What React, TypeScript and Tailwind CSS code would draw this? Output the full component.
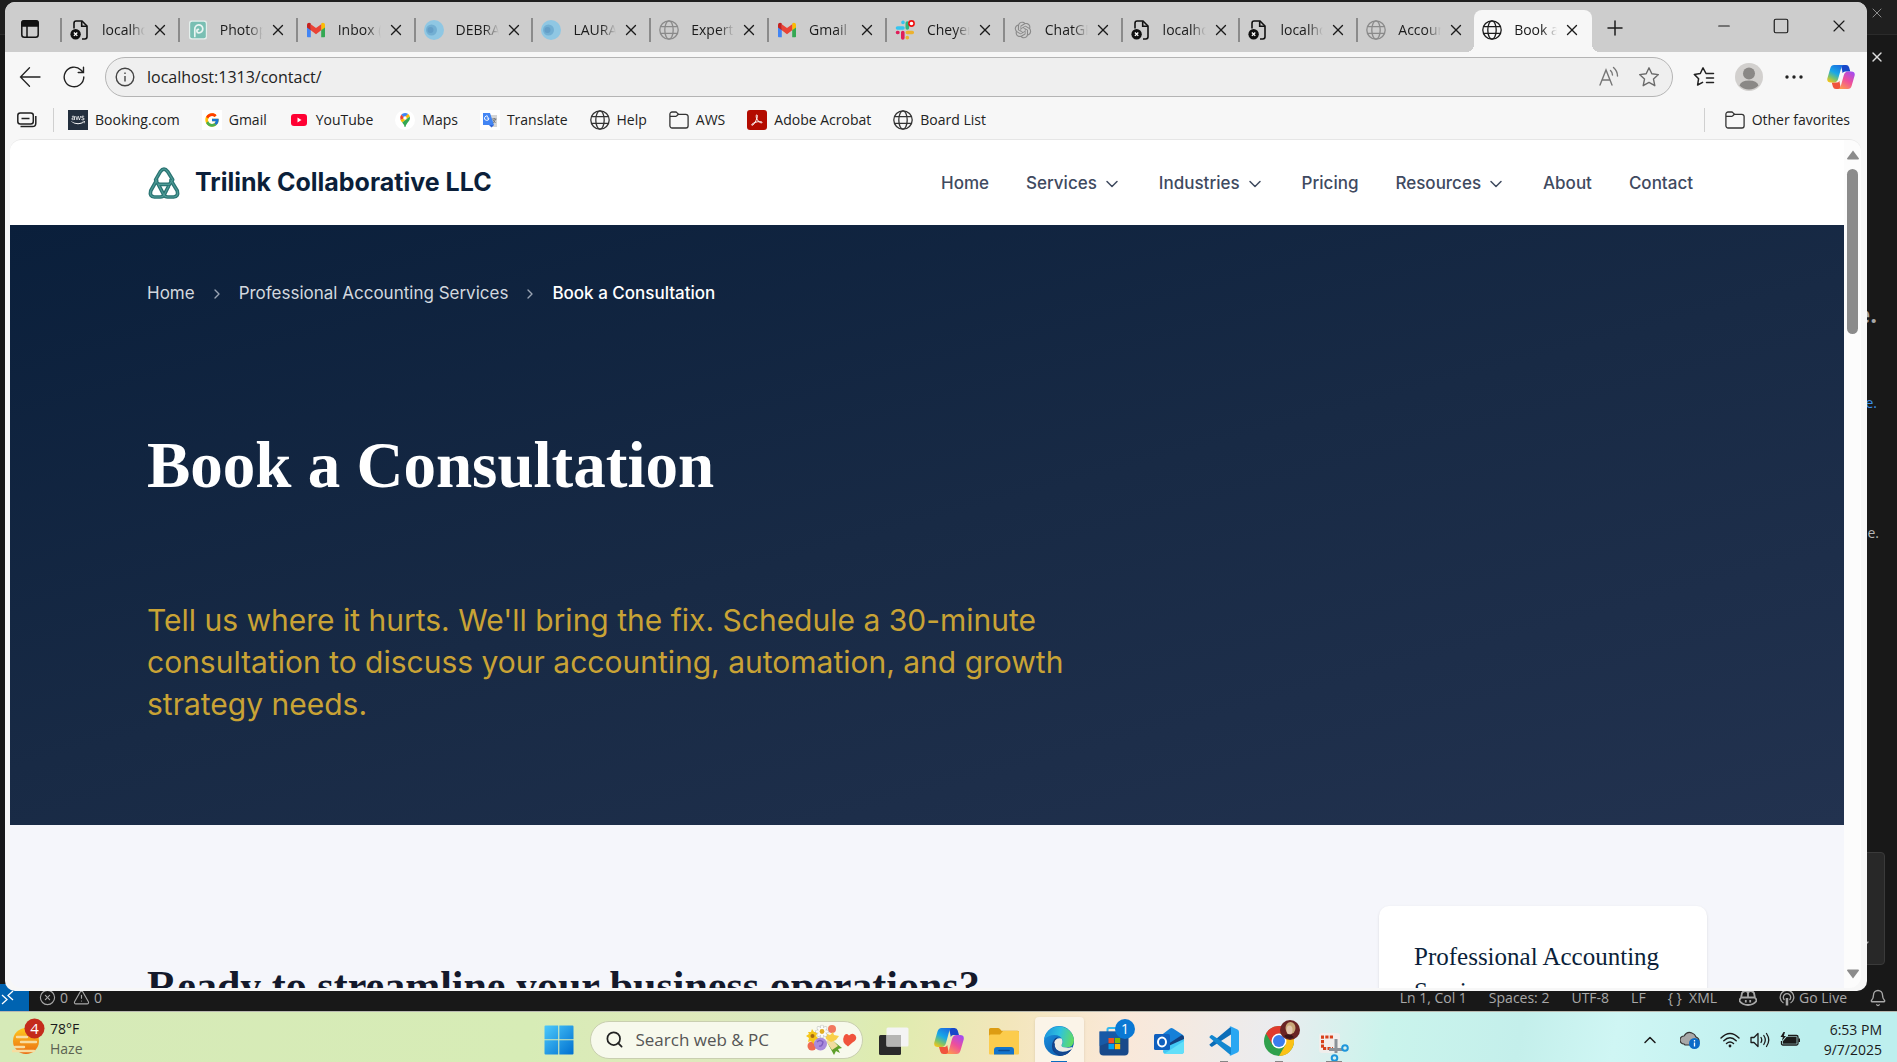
import React, { useId } from "react";
import {
  Bell,
  ChevronDown,
  ChevronRight,
  ChevronUp,
  CircleX,
  Minus,
  Plus,
  Search,
  Square,
  TriangleAlert,
  X,
} from "lucide-react";
import { FcGoogle } from "react-icons/fc";
import { FaAws } from "react-icons/fa";
import { RiOpenaiFill } from "react-icons/ri";

const uiFont = "font-['Open_Sans','Noto_Sans',sans-serif]";

/* ---------- site favicons ---------- */

function GlobeIcon({ className = "" }: { className?: string }) {
  return (
    <svg viewBox="0 0 20 20" className={"size-5 shrink-0 " + className} fill="none" stroke="currentColor" strokeWidth="1.3">
      <circle cx="10" cy="10" r="9.2" />
      <ellipse cx="10" cy="10" rx="4.2" ry="9.2" />
      <path d="M1.8 6.7h16.4M1.8 13.3h16.4" />
    </svg>
  );
}

function BrokenPage() {
  return (
    <svg viewBox="0 0 20 20" className="size-5 shrink-0" fill="none" stroke="#111" strokeWidth="1.6">
      <path d="M4 8.5V3.2A2.2 2.2 0 0 1 6.2 1H12l5 5v10.8a2.2 2.2 0 0 1-2.2 2.2H12" />
      <path d="M11.7 1.2v5.1H17" />
      <circle cx="5.6" cy="14.2" r="5.2" fill="#111" stroke="none" />
      <path d="m3.9 12.5 3.4 3.4m0-3.4-3.4 3.4" stroke="#fff" strokeWidth="1.3" />
    </svg>
  );
}

function PhotopeaIcon() {
  return (
    <svg viewBox="0 0 20 20" className="size-5 shrink-0">
      <rect x="1" y="0.5" width="18" height="19" rx="2.5" fill="#e4efec" />
      <rect x="2.2" y="1.7" width="15.6" height="16.6" rx="2" fill="#79bfb3" />
      <path d="M6.8 16.5V9.2a4 4 0 1 1 4 3.7c-2.400 0-2.600-3.400-.4-3.600" fill="none" stroke="#e9f5f2" strokeWidth="1.7" strokeLinecap="round" />
    </svg>
  );
}

function GmailIcon() {
  return (
    <svg viewBox="0 0 20 16" className="h-4 w-5 shrink-0">
      <path d="M1 4v10.500q0 .8.8.8h3V7.500Z" fill="#4285f4" />
      <path d="M19 4v10.500q0 .8-.8.8h-3V7.500Z" fill="#34a853" />
      <path d="M15.200 2.300v6L19 5.400V3c0-2-2.200-2.800-3.800-1.600Z" fill="#fbbc04" />
      <path d="M4.800 8.300V2.200L10 6.100l5.200-3.900v6.100L10 12.200Z" fill="#ea4335" />
      <path d="M1 3v2.400l3.800 2.900V1.500C3.200.2 1 1 1 3Z" fill="#c5221f" />
    </svg>
  );
}

function BlueDot() {
  return (
    <svg viewBox="0 0 20 20" className="size-5 shrink-0">
      <circle cx="10" cy="10" r="10" fill="#8fc7e3" />
      <circle cx="7.500" cy="10" r="5.500" fill="#72afd3" />
      <circle cx="6.500" cy="10" r="3" fill="#649fc8" />
    </svg>
  );
}

function SlackIcon() {
  return (
    <svg viewBox="0 0 20 20" className="size-5 shrink-0" strokeWidth="3.600" strokeLinecap="round" fill="none">
      <path d="M2.500 8H8M8 2.200v.3" stroke="#36c5f0" />
      <path d="M12.300 3v5" stroke="#2eb67d" />
      <path d="M12.300 12.500h5M12.300 17.500v.2" stroke="#ecb22e" />
      <path d="M7.800 12.500V18M2.500 12.500h.4" stroke="#e01e5a" />
      <circle cx="16.500" cy="3.500" r="2.600" stroke="#e11" strokeWidth="1.600" fill="#fff" />
    </svg>
  );
}

function FolderIcon() {
  return (
    <svg viewBox="0 0 20 20" className="size-5 shrink-0" fill="none" stroke="#333" strokeWidth="1.300">
      <path d="M.9 4.200A2.200 2.200 0 0 1 3.100 2h3.500q.8 0 1.300.6L9.500 4.300h7.400a2.200 2.200 0 0 1 2.200 2.200v9.300a2.200 2.200 0 0 1-2.200 2.200H3.100a2.200 2.200 0 0 1-2.200-2.200Z" />
      <path d="M1 6.400h5.500q.8 0 1.300-.6l1.600-1.500" />
    </svg>
  );
}

function CopilotIcon({ className }: { className: string }) {
  const id = useId().replace(/:/g, "");
  return (
    <svg viewBox="0 0 30 28" className={className}>
      <defs>
        <linearGradient id={id + "a"} x1="0.700" y1="0" x2="0.200" y2="1">
          <stop offset="0" stopColor="#1b6fe0" />
          <stop offset="0.450" stopColor="#18a8e8" />
          <stop offset="0.750" stopColor="#7cc36a" />
          <stop offset="1" stopColor="#f5c518" />
        </linearGradient>
        <linearGradient id={id + "b"} x1="0.800" y1="0" x2="0.200" y2="1">
          <stop offset="0" stopColor="#a44bf0" />
          <stop offset="0.500" stopColor="#ee4f9b" />
          <stop offset="1" stopColor="#ff9a4d" />
        </linearGradient>
      </defs>
      <path d="M15 1h5.500q2.500 0 3.200 2.500l1.300 4.500h-5.500q-2 0-2.700 2Z" fill="#1748c9" />
      <path d="M15 27H9.500Q7 27 6.300 24.500L5 20h5.500q2 0 2.700-2Z" fill="#f0543c" />
      <path d="M7.500 1H18q-2 .5-2.700 3L12 16q-1.200 4-4.500 4H4Q-.5 20 .3 15.500L3.500 4.500Q4.500 1 7.500 1Z" fill={`url(#${id}a)`} />
      <path d="M22.500 27H12q2-.5 2.700-3L18 12q1.200-4 4.500-4H26q4.500 0 3.700 4.500L26.500 23.500Q25.500 27 22.500 27Z" fill={`url(#${id}b)`} />
    </svg>
  );
}

/* ---------- browser tab strip ---------- */

type Tab = { title: string; icon: React.ReactNode; active?: boolean };

const tabs: Tab[] = [
  { title: "localhost", icon: <BrokenPage /> },
  { title: "Photopea", icon: <PhotopeaIcon /> },
  { title: "Inbox (4)", icon: <GmailIcon /> },
  { title: "DEBRA", icon: <BlueDot /> },
  { title: "LAURA", icon: <BlueDot /> },
  { title: "Expert", icon: <GlobeIcon className="text-[#8a8a8a]" /> },
  { title: "Gmail", icon: <GmailIcon /> },
  { title: "Cheyenne", icon: <SlackIcon /> },
  { title: "ChatGPT", icon: <RiOpenaiFill className="size-5 shrink-0 text-[#8a8a8a]" /> },
  { title: "localhost", icon: <BrokenPage /> },
  { title: "localhost", icon: <BrokenPage /> },
  { title: "Accounting", icon: <GlobeIcon className="text-[#8a8a8a]" /> },
  { title: "Book a Consultation", icon: <GlobeIcon className="text-[#1b1b1b]" />, active: true },
];

function TabStrip() {
  return (
    <div className="flex h-[50px] shrink-0 items-end bg-[#cdcdcd]">
      <button aria-label="Tab actions" className="flex h-[42px] w-[55px] items-center pb-1 pl-4">
        <svg viewBox="0 0 18 18" className="size-[18px]" fill="none" stroke="#111" strokeWidth="1.500">
          <rect x="0.800" y="0.800" width="16.400" height="16.400" rx="2.500" />
          <path d="M1 2.500q0-1.500 1.500-1.500h13q1.500 0 1.500 1.500V6H1Z" fill="#111" />
          <path d="M6 6v11" />
        </svg>
      </button>
      <div role="tablist" className="flex min-w-0 flex-[0_1_1532px]">
        {tabs.map((t, i) => (
          <div
            key={i}
            role="tab"
            aria-selected={!!t.active}
            className={
              "relative flex h-[42px] min-w-0 flex-1 items-center " +
              (t.active ? "rounded-t-lg bg-[#f7f7f7]" : "")
            }
          >
            {t.active && (
              <>
                <span className="absolute -left-2 bottom-0 size-2 bg-[radial-gradient(circle_at_0_0,#cdcdcd_8px,#f7f7f7_8px)]" />
                <span className="absolute -right-2 bottom-0 size-2 bg-[radial-gradient(circle_at_100%_0,#cdcdcd_8px,#f7f7f7_8px)]" />
              </>
            )}
            <div className={"mb-[2px] flex h-6 w-full items-center pl-2 " + (t.active ? "" : "border-l-2 border-[#8b8b8b]")}>
              {t.icon}
              <span className="ml-3 w-[43px] shrink-0 overflow-hidden whitespace-nowrap text-sm text-[#1b1b1b] [mask-image:linear-gradient(to_right,#000_65%,transparent)]">
                {t.title}
              </span>
              <button aria-label={"Close " + t.title} className="ml-[6px]">
                <X className="size-[18px] text-[#1b1b1b]" strokeWidth={1.8} />
              </button>
            </div>
          </div>
        ))}
      </div>
      <button aria-label="New tab" className="mb-3 ml-[11px]">
        <Plus className="size-6 text-[#1b1b1b]" strokeWidth={1.5} />
      </button>
      <div className="mb-4 ml-auto mr-[18px] flex items-center gap-[39px] text-[#1b1b1b]">
        <button aria-label="Minimize"><Minus className="size-[18px]" strokeWidth={1.6} /></button>
        <button aria-label="Maximize">
          <Square className="size-[18px]" strokeWidth={1.6} />
        </button>
        <button aria-label="Close window"><X className="size-5" strokeWidth={1.4} /></button>
      </div>
    </div>
  );
}

/* ---------- address bar ---------- */

function StarIcon() {
  return (
    <svg viewBox="0 0 22 22" className="size-[22px]" fill="none" stroke="#6b6b6b" strokeWidth="1.400" strokeLinejoin="round">
      <path d="m11 1.800 2.800 6 6.600.8-4.900 4.500 1.300 6.600-5.800-3.300-5.800 3.300 1.300-6.600L1.600 8.600l6.600-.8Z" />
    </svg>
  );
}

function AddressBar() {
  return (
    <div className="flex h-[50px] shrink-0 items-center pl-[14px] pr-3">
      <button aria-label="Back">
        <svg viewBox="0 0 22 22" className="size-[22px]" fill="none" stroke="#222" strokeWidth="1.300" strokeLinecap="round">
          <path d="M21 11H1.500M10.500 1.800 1.500 11l9 9.200" />
        </svg>
      </button>
      <button aria-label="Refresh" className="ml-[22px]">
        <svg viewBox="0 0 22 22" className="size-[22px]" fill="none" stroke="#222" strokeWidth="1.400" strokeLinecap="round">
          <path d="M20.800 11A9.800 9.800 0 1 1 17.900 4l2 2M20.500 1.200v5.300h-5.300" />
        </svg>
      </button>
      <div className="ml-5 flex h-10 flex-1 items-center rounded-full border border-[#b4b4b4] bg-[#efefef] pl-[9px] pr-3">
        <svg viewBox="0 0 20 20" className="size-5 shrink-0" fill="none" stroke="#444" strokeWidth="1.400">
          <circle cx="10" cy="10" r="8.800" />
          <path d="M10 9v5.500M10 5.500v1.600" />
        </svg>
        <input
          aria-label="Address"
          defaultValue="localhost:1313/contact/"
          className="ml-3 min-w-0 flex-1 bg-transparent text-base text-[#222] outline-none"
        />
        <button aria-label="Read aloud">
          <svg viewBox="0 0 22 22" className="size-[22px]" fill="none" stroke="#767676" strokeWidth="1.400" strokeLinecap="round">
            <path d="M2 19 8 4l6 15M4 14h8M12.500 4.500q2 1.800 2 4.500M15.500 1.500Q19.500 5 19.500 10" />
          </svg>
        </button>
        <button aria-label="Add to favorites" className="ml-[18px]">
          <StarIcon />
        </button>
      </div>
      <button aria-label="Favorites" className="ml-5">
        <svg viewBox="0 0 22 22" className="size-[22px]" fill="none" stroke="#222" strokeWidth="1.500" strokeLinejoin="round" strokeLinecap="round">
          <path d="M13 7.500 10 1.800 7.300 7.500l-6 .9 4.300 4.300-1 6.300 5-2.700M13 7.500h7.500M13.500 12h7M13.500 16.500h7" />
        </svg>
      </button>
      <button aria-label="Profile" className="ml-5">
        <svg viewBox="0 0 28 28" className="size-7">
          <circle cx="14" cy="14" r="14" fill="#d2d0ce" />
          <circle cx="14" cy="10.500" r="6" fill="#8a8886" />
          <path d="M4.500 22.500Q6 17.500 14 17.500t9.500 5a13.500 13.500 0 0 1-19 0Z" fill="#8a8886" />
        </svg>
      </button>
      <button aria-label="Settings and more" className="ml-[22px]">
        <svg viewBox="0 0 18 4" className="h-1 w-[18px]" fill="#222">
          <circle cx="2" cy="2" r="1.700" /><circle cx="9" cy="2" r="1.700" /><circle cx="16" cy="2" r="1.700" />
        </svg>
      </button>
      <button aria-label="Copilot" className="ml-6">
        <CopilotIcon className="h-[26px] w-7" />
      </button>
    </div>
  );
}

/* ---------- favorites bar ---------- */

const favorites: { label: string; icon: React.ReactNode }[] = [
  {
    label: "Booking.com",
    icon: (
      <span className="flex size-5 items-center justify-center bg-[#232f3e]">
        <FaAws className="size-[14px] text-white" />
      </span>
    ),
  },
  { label: "Gmail", icon: <span className="flex size-5 items-center justify-center bg-white"><FcGoogle className="size-4" /></span> },
  {
    label: "YouTube",
    icon: (
      <svg viewBox="0 0 20 20" className="size-5">
        <rect x="2" y="4" width="16" height="12" rx="3" fill="#f03" />
        <path d="m8.500 7.500 4 2.500-4 2.500Z" fill="#fff" />
      </svg>
    ),
  },
  {
    label: "Maps",
    icon: (
      <svg viewBox="0 0 20 20" className="size-5">
        <circle cx="10" cy="10" r="10" fill="#fff" />
        <path d="M10 3a5 5 0 0 0-3.800 1.800L10 8.200l3.200-4.100A5 5 0 0 0 10 3Z" fill="#4285f4" />
        <path d="M6.200 4.800A5 5 0 0 0 5.600 10L10 8.200Z" fill="#ea4335" />
        <path d="M13.200 4.100 5.600 10.500 7.200 12.600 14.800 6.500a5 5 0 0 0-1.600-2.400Z" fill="#fbbc04" />
        <path d="M14.800 6.500q.6 2.300-.7 4.200C12.500 13 11 14.500 10.400 17h-.8q-.5-2.400-2.400-4.400Z" fill="#34a853" />
        <circle cx="10" cy="8" r="1.700" fill="#fff" />
      </svg>
    ),
  },
  {
    label: "Translate",
    icon: (
      <svg viewBox="0 0 20 20" className="size-5">
        <rect width="20" height="20" fill="#fff" />
        <path d="M8 5h9v12h-5Z" fill="#d6d6d6" />
        <path d="M3 3h7l4 12H3Z" fill="#4285f4" />
        <path d="M9 15h5l-2.500 2.500Z" fill="#3367d6" />
        <path d="M9 8H6.800M8.900 8.200A2.200 2.200 0 1 1 8 6.400" fill="none" stroke="#fff" />
        <path d="M12 9h4.500M14.200 8v1m1.300 0q-.5 2.500-2.700 4m.2-3 2.500 3" fill="none" stroke="#5f6368" strokeWidth="0.800" />
      </svg>
    ),
  },
  { label: "Help", icon: <GlobeIcon className="text-[#333]" /> },
  { label: "AWS", icon: <FolderIcon /> },
  {
    label: "Adobe Acrobat",
    icon: (
      <svg viewBox="0 0 20 20" className="size-5">
        <rect width="20" height="20" rx="3" fill="#b30b00" />
        <path d="M4.800 14.500c1.500-1.700 4.800-2.900 7.800-2.900 2.200 0 3 .7 2.200 1.200-1 .5-4.300-1.500-5.400-5-.5-2.300 0-3.200.6-2.900.7.400.4 2.600-.9 5.300-1.400 3-3 5.100-4 5.100-.4 0-.6-.4-.3-.8Z" fill="none" stroke="#fff" strokeWidth="1" />
      </svg>
    ),
  },
  { label: "Board List", icon: <GlobeIcon className="text-[#333]" /> },
];

function FavoritesBar() {
  return (
    <div className="flex h-[37px] shrink-0 items-center pb-[2px] pl-3 pr-[17px] text-sm text-[#222]">
      <svg viewBox="0 0 20 16" className="h-4 w-5" fill="none" stroke="#222" strokeWidth="1.500">
        <rect x="0.800" y="1" width="15.500" height="11" rx="2.500" />
        <path d="M4.500 6.500h8M3.500 14.500h12q3.300 0 3.300-3.300V4" />
      </svg>
      <div className="ml-4 h-6 w-px bg-[#d0d0d0]" />
      <nav aria-label="Favorites" className="ml-[14px] flex items-center gap-[22px]">
        {favorites.map((f) => (
          <a key={f.label} href="#" className="flex items-center gap-[7px] whitespace-nowrap">
            {f.icon}
            {f.label}
          </a>
        ))}
      </nav>
      <div className="ml-auto h-6 w-px bg-[#d0d0d0]" />
      <a href="#" className="ml-5 flex items-center gap-[7px] whitespace-nowrap">
        <FolderIcon />
        Other favorites
      </a>
    </div>
  );
}

/* ---------- web page ---------- */

function TrilinkLogo() {
  const layers = [
    { color: "#2b7574", width: 4 },
    { color: "#4f9c97", width: 1.2 },
  ];
  return (
    <svg viewBox="0 0 34 35" className="h-8 w-[34px]" fill="none" strokeLinejoin="round" strokeLinecap="round">
      {layers.map((l) => (
        <g key={l.color} stroke={l.color} strokeWidth={l.width}>
          <path d="M9.500 17.500 7.800 14 13 5Q17-.5 21 5l5.500 9-3.500 5H11" />
          <path d="M9 14.500 2.500 26Q.8 32.500 6.500 32.800H13q3 0 4.300-2.500L22 21" />
          <path d="M24.500 14.500 31.500 26q1.700 6.500-4 6.800H21q-3 0-4.300-2.500L10.500 18.500" />
        </g>
      ))}
    </svg>
  );
}

const navItems = [
  { label: "Home" },
  { label: "Services", menu: true },
  { label: "Industries", menu: true },
  { label: "Pricing" },
  { label: "Resources", menu: true },
  { label: "About" },
  { label: "Contact" },
];

function WebPage() {
  return (
    <div className="flex min-w-0 flex-1 flex-col font-['Inter',sans-serif]">
      <header className="h-[85px] shrink-0 bg-white">
        <div className="mx-auto flex h-full max-w-[1560px] items-center justify-between">
          <a href="#" className="flex items-center gap-[14px] text-[25px] font-bold text-[#0b1f3a]">
            <TrilinkLogo />
            Trilink Collaborative LLC
          </a>
          <nav aria-label="Main" className="mr-[14px] mt-[2px] flex items-center gap-[37px] text-[17px] font-medium text-[#3f4a5f]">
            {navItems.map((n) => (
              <a key={n.label} href="#" className="flex items-center gap-[5px]">
                {n.label}
                {n.menu && <ChevronDown className="size-5" strokeWidth={1.8} />}
              </a>
            ))}
          </nav>
        </div>
      </header>

      <section className="shrink-0 bg-[linear-gradient(165deg,#0a1f3b_0%,#182a45_50%,#22324f_100%)] pb-[100px] pt-14">
        <div className="mx-auto max-w-[1560px]">
          <nav aria-label="Breadcrumb" className="flex h-[26px] items-center text-[17px] text-[#d3d8df]">
            <a href="#">Home</a>
            <ChevronRight className="mx-[14px] size-4 text-[#9aa4b3]" />
            <a href="#">Professional Accounting Services</a>
            <ChevronRight className="mx-[14px] size-4 text-[#9aa4b3]" />
            <span aria-current="page" className="font-medium text-white">Book a Consultation</span>
          </nav>
          <h1 className="mt-[118px] font-['Liberation_Serif',serif] text-[65px] font-bold leading-[80px] text-white">
            Book a Consultation
          </h1>
          <p className="mt-[94px] max-w-[940px] text-[30px] leading-[42px] text-[#c9a335]">
            Tell us where it hurts. We'll bring the fix. Schedule a 30-minute consultation to discuss your accounting,
            automation, and growth strategy needs.
          </p>
        </div>
      </section>

      <section className="min-h-0 flex-1 overflow-hidden bg-[#f5f6fb] pt-[81px]">
        <div className="mx-auto flex max-w-[1560px] items-start justify-between">
          <h2 className="mt-[55px] font-['Liberation_Serif',serif] text-[42px] font-bold leading-[50px] text-[#14192b]">
            Ready to streamline your business operations?
          </h2>
          <aside className="w-[328px] rounded-[10px] bg-white px-[35px] py-[33px] shadow-sm">
            <h3 className="font-['Liberation_Serif',serif] text-[25px] leading-[35px] text-[#0b1f3a]">
              Professional Accounting Services
            </h3>
          </aside>
        </div>
      </section>
    </div>
  );
}

function Scrollbar() {
  return (
    <div className="flex w-[17px] shrink-0 flex-col items-center bg-[#fcfcfc] pb-[9px] pt-[10px]">
      <svg viewBox="0 0 12 10" className="h-[10px] w-3" fill="#8b8b8b"><path d="M6 .5 12 8.500q0 1-1 1H1q-1 0-1-1Z" /></svg>
      <div className="mt-[9px] h-[165px] w-[11px] rounded-full bg-[#8b8b8b]" />
      <svg viewBox="0 0 12 10" className="mt-auto h-[10px] w-3" fill="#8b8b8b"><path d="m6 9.500 6-8q0-1-1-1H1q-1 0-1 1Z" /></svg>
    </div>
  );
}

function BrowserWindow() {
  return (
    <div className="absolute bottom-5 left-[5px] right-[30px] top-[2px] flex flex-col overflow-hidden rounded-[10px] bg-[#f7f7f7]">
      <TabStrip />
      <AddressBar />
      <FavoritesBar />
      <div className="mb-[3px] ml-[5px] mr-[6px] flex min-h-0 flex-1 overflow-hidden rounded-xl border-t border-[#e6e6e6]">
        <WebPage />
        <Scrollbar />
      </div>
    </div>
  );
}

/* ---------- editor behind the browser ---------- */

function Editor() {
  return (
    <div className="flex h-full flex-col bg-[#181818] text-[#a8a8a8]">
      <div className="flex h-[35px] shrink-0 items-start justify-end border-b border-[#2b2b2b] bg-[#1f1f1f] pr-3 pt-[5px]">
        <X className="size-4" strokeWidth={1.2} />
      </div>
      <div className="flex min-h-0 flex-1 flex-col items-end">
        <X className="mr-3 mt-[14px] size-4 text-[#ddd]" />
        <span className="mr-5 mt-[233px] text-2xl font-bold leading-8">e.</span>
        <span className="mr-5 mt-[61px] text-sm leading-6 text-[#3b8fe8]">e.</span>
        <span className="mr-[18px] mt-[106px] text-sm leading-6 text-[#b5b5b5]">e.</span>
        <div className="mr-3 mt-[307px] flex h-[113px] w-16 items-end justify-end rounded border border-[#3a3a3a] bg-[#282828] pb-3 pr-3">
          <ChevronDown className="size-4" />
        </div>
      </div>
      <div className="flex h-[27px] shrink-0 items-center text-sm">
        <div className="flex h-full w-[29px] items-center bg-[#0063b1] text-white">
          <svg viewBox="0 0 16 16" className="size-4" fill="none" stroke="currentColor" strokeWidth="1.300">
            <path d="m2 5 5 4.500L2 14M13 1 8 5.500 13 10" />
          </svg>
        </div>
        <CircleX className="ml-[10px] size-[17px]" strokeWidth={1.6} />
        <span className="ml-1">0</span>
        <TriangleAlert className="ml-[5px] size-[17px]" strokeWidth={1.6} />
        <span className="ml-1">0</span>
        <div className="ml-auto flex items-center gap-[22px] whitespace-nowrap pr-[10px]">
          <span>Ln 1, Col 1</span>
          <span>Spaces: 2</span>
          <span>UTF-8</span>
          <span>LF</span>
          <span>{"{ }"}&nbsp; XML</span>
          <svg viewBox="0 0 18 16" className="h-4 w-[18px]" fill="none" stroke="currentColor" strokeWidth="1.800">
            <path d="M2 8 3 3q1-2 3.500-2T9 3.500Q9 1 11.500 1T15 3l1 5q1.500.8 1.500 3-3 4-8.500 4T.5 11Q.5 8.800 2 8ZM3 7.500h12M6.800 10v2.500M11.200 10v2.500M9 3.500v3.500" />
          </svg>
          <span className="flex items-center gap-1">
            <svg viewBox="0 0 16 16" className="size-4" fill="none" stroke="currentColor" strokeWidth="1.300">
              <path d="M4.500 13A6.800 6.800 0 1 1 11.500 13M5.500 10A3.700 3.700 0 1 1 10.500 10" />
              <path d="M8 8v7.500" strokeWidth="2.500" />
            </svg>
            Go Live
          </span>
          <Bell className="size-[18px]" strokeWidth={1.8} />
        </div>
      </div>
    </div>
  );
}

/* ---------- taskbar ---------- */

function StartIcon() {
  return (
    <svg viewBox="0 0 30 30" className="size-[30px]">
      <defs>
        <linearGradient id="start" x1="0" y1="0" x2="1" y2="1">
          <stop offset="0" stopColor="#4cc9fb" />
          <stop offset="1" stopColor="#0070d0" />
        </linearGradient>
      </defs>
      <path d="M1.500.5h12.700v13.700H.5V1.500q0-1 1-1ZM15.300.5h13.200q1 0 1 1v12.700H15.300ZM.5 15.300h13.700v14.200H1.500q-1 0-1-1ZM15.300 15.300h14.200v13.200q0 1-1 1H15.300Z" fill="url(#start)" />
    </svg>
  );
}

function Bouquet() {
  return (
    <svg viewBox="0 0 52 32" className="h-8 w-[52px]">
      <path d="m21 18 7 13 2-4 4 2-2-4 4-1-10-8Z" fill="#5e9f2a" />
      <path d="m20 17 6 9 6-4-7-8Z" fill="#f0dca0" />
      <circle cx="26" cy="5" r="4" fill="#f2785e" />
      <circle cx="6" cy="22" r="4.500" fill="#ef6a50" />
      <path d="m2 8 3 0 1-3 2 3 4 0-2 4 3 3-4 1-1 4-3-3-3 1 1-4-3-2 3-2Z" fill="#f6c619" />
      <circle cx="6.500" cy="12" r="2" fill="#a56a12" />
      <path d="m19 9 5 2 3-3 1 3 5 1-3 4-5 2-5-3Z" fill="#f9cf48" />
      <circle cx="14.500" cy="20" r="6.500" fill="#a98bdc" />
      <path d="M11 18q3-3 6 0-1 5-4 4" fill="none" stroke="#7f5fc0" strokeWidth="1.400" />
      <g stroke="#b9bbb6" strokeWidth="3.600" strokeLinecap="round">
        <path d="M16 2.500v10M11 7.500h10M12.500 4l7 7M19.500 4l-7 7" />
      </g>
      <g stroke="#fbfbf8" strokeWidth="2.600" strokeLinecap="round">
        <path d="M16 2.500v10M11 7.500h10M12.500 4l7 7M19.500 4l-7 7" />
      </g>
      <circle cx="16" cy="7.500" r="2.400" fill="#e3ad22" />
      <path d="M38 12q2-3.500 5-.5 3.500-3.500 6.500 0 2.500 4-3 7l-4.500 4q-7-4-4-10.500Z" fill="#f0533c" />
    </svg>
  );
}

function FileExplorerIcon() {
  return (
    <svg viewBox="0 0 30 28" className="h-7 w-[30px]">
      <path d="M0 2.500Q0 1 1.500 1H9q1 0 2 1l1.500 1.800H28.500Q30 4 30 5.500V12H0Z" fill="#dd9c12" />
      <path d="M0 9q0-1.500 1.500-1.500H11L14 4h14.500Q30 4 30 5.500v21q0 1-1 1H1q-1 0-1-1Z" fill="#fccc4d" />
      <path d="M5 27.500V23q0-3 3-3h14q3 0 3 3v4.500Z" fill="#1374cc" />
      <path d="M10 23.500h10" stroke="#0b4c94" strokeWidth="1.600" strokeLinecap="round" />
    </svg>
  );
}

function EdgeIcon() {
  return (
    <svg viewBox="0 0 30 30" className="size-[30px]">
      <defs>
        <linearGradient id="edgeTop" x1="0" y1="0.300" x2="1" y2="0.500">
          <stop offset="0" stopColor="#1c93dc" />
          <stop offset="0.500" stopColor="#2fc2df" />
          <stop offset="1" stopColor="#62dc62" />
        </linearGradient>
        <linearGradient id="edgeLow" x1="0" y1="0" x2="1" y2="1">
          <stop offset="0" stopColor="#1a96e6" />
          <stop offset="1" stopColor="#0c4f9f" />
        </linearGradient>
      </defs>
      <circle cx="15" cy="15" r="15" fill="url(#edgeLow)" />
      <path d="M10.500 17Q9.500 25 18 26q6 .5 10.300-4A15 15 0 0 1 16 30Q8 27 8 20.500 8 13 14 11Z" fill="#123f86" />
      <path d="M.2 13.500A15 15 0 0 1 30 14q0 7.500-8 7.500-5 0-4.500-2.500 2-2 1-5Q16.500 9 10.500 9 4 9 .2 13.500Z" fill="url(#edgeTop)" />
      <path d="M17.600 12.600q-4.300-1-6.600 2-2.500 5 1.500 9 5.500 4.400 14.500 0 2-1 1.300-2.600Q25 22 22 21.500q-5 0-4.500-2.500 2-2.500.1-6.400Z" fill="#f9f1e6" opacity="0.950" />
      <path d="M11 16.500Q9.500 24 17 26.500q6 1.500 10-2.500a14.800 14.800 0 0 1-9 5.500Q9.500 28 9.200 21q0-3 1.800-4.500Z" fill="#134a94" />
    </svg>
  );
}

function StoreIcon() {
  return (
    <span className="relative">
      <svg viewBox="0 0 30 30" className="size-[30px]">
        <path d="M8.500 6V3.500Q8.500 2 10 2h9q1.500 0 1.500 1.500V6" fill="none" stroke="#35b8ee" strokeWidth="2" />
        <path d="M.5 5.500h29v20q0 4-4 4h-21q-4 0-4-4Z" fill="#18498a" />
        <path d="M.5 5.500h29v3L.5 20Z" fill="#1762b4" opacity="0.700" />
        <path d="M9.500 12H15v5.200H9.500Z" fill="#f25022" />
        <path d="M15.800 12h5.400v5.200h-5.400Z" fill="#7fba00" />
        <path d="M9.500 18H15v5.200H9.500Z" fill="#00a4ef" />
        <path d="M15.800 18h5.400v5.200h-5.400Z" fill="#ffb900" />
      </svg>
      <span className="absolute -right-[6px] -top-[7px] flex size-5 items-center justify-center rounded-full bg-[#0a78d4] text-sm text-white">1</span>
    </span>
  );
}

function OutlookIcon() {
  return (
    <svg viewBox="0 0 30 28" className="h-7 w-[30px]">
      <path d="M5 10 16 1.500q1.500-1 3 0L29 8q1 1 1 2v5L12 24Z" fill="#1680d8" />
      <path d="m14 17 14-9q2 1 2 3v3L16 22Z" fill="#14417f" />
      <path d="m10 21 20-9v12q0 3-3 3H12q-3 0-3-3Z" fill="#42c8f5" />
      <path d="m10 27 20-13v10q0 3-3 3Z" fill="#62dff9" />
      <rect y="7" width="16" height="16" rx="1.500" fill="#0f5fbe" />
      <ellipse cx="8" cy="15" rx="4" ry="4.500" fill="none" stroke="#fff" strokeWidth="2" />
    </svg>
  );
}

function VsCodeIcon() {
  return (
    <svg viewBox="0 0 30 30" className="size-[30px]">
      <path d="M1 18 22 .5V8.500L3.500 20.500q-.8.500-1.500 0L.7 19.300Q0 18.600 1 18Z" fill="#0b6db8" />
      <path d="M1 12 22 29.500v-8L3.500 9.200q-.8-.5-1.500 0L.7 10.500Q0 11.200 1 12Z" fill="#1387d0" />
      <path d="M22 .5 28.500 3.500Q30 4.200 30 6v18q0 1.800-1.500 2.500L22 29.500q-1 .3-1.500-.5l1.500-1V2l-1.500-1q.5-.8 1.500-.5Z" fill="#2aa7f2" />
    </svg>
  );
}

function ChromeIcon() {
  return (
    <span className="relative">
      <svg viewBox="0 0 30 30" className="size-[30px]">
        <circle cx="15" cy="15" r="15" fill="#2fa04c" />
        <path d="M2 7.500A15 15 0 0 1 28 7.500H15l-6.500 11.200Z" fill="#e13b2e" />
        <path d="M28 7.500A15 15 0 0 1 15 30l6.500-11.200L21.500 7.500Z" fill="#fbc116" />
        <circle cx="15" cy="15" r="7.500" fill="#fff" />
        <circle cx="15" cy="15" r="6" fill="#3b7ded" />
      </svg>
      <svg viewBox="0 0 20 20" className="absolute -right-[6px] -top-[6px] size-5">
        <circle cx="10" cy="10" r="10" fill="#6b2424" />
        <ellipse cx="10.500" cy="8" rx="5" ry="6" fill="#c9a878" />
        <ellipse cx="9.500" cy="10" rx="3" ry="4.500" fill="#e3c6ad" />
        <path d="M4 16q5-4 10 1-5 4-10-1Z" fill="#3a1518" />
      </svg>
    </span>
  );
}

function SnippingIcon() {
  return (
    <svg viewBox="0 0 30 30" className="mt-[10px] size-[30px]">
      <rect x="0" y="2" width="21" height="20" rx="3" fill="#f0eeec" />
      <path d="M14 6H3.500v11.500H14" fill="none" stroke="#d8401a" strokeWidth="3" strokeDasharray="3.200 1.300" />
      <path d="M17 8v14M10 18.500h14" stroke="#8c9198" strokeWidth="3" />
      <circle cx="26" cy="17" r="2.800" fill="none" stroke="#1e96dc" strokeWidth="2" />
      <circle cx="15.500" cy="27" r="2.800" fill="none" stroke="#1e96dc" strokeWidth="2" />
    </svg>
  );
}

const taskbarApps: { name: string; icon: React.ReactNode; mark?: string; active?: boolean }[] = [
  {
    name: "Task view",
    icon: (
      <svg viewBox="0 0 30 28" className="h-7 w-[30px]">
        <rect y="8" width="22" height="20" rx="1.500" fill="#2a2a2a" />
        <rect x="7.500" y="0.500" width="22" height="19" rx="1.500" fill="#f4f4f4" />
        <path d="M7.500 8H22v11.500H7.500Z" fill="#b5b5b3" />
      </svg>
    ),
  },
  { name: "Copilot", icon: <CopilotIcon className="h-7 w-[30px]" /> },
  { name: "File Explorer", icon: <FileExplorerIcon /> },
  { name: "Microsoft Edge", icon: <EdgeIcon />, mark: "bg-[#0a6cc0] w-4", active: true },
  { name: "Microsoft Store", icon: <StoreIcon /> },
  { name: "Outlook", icon: <OutlookIcon /> },
  { name: "Visual Studio Code", icon: <VsCodeIcon />, mark: "bg-[#868686] w-2" },
  { name: "Google Chrome", icon: <ChromeIcon />, mark: "bg-[#868686] w-2" },
  { name: "Snipping Tool", icon: <SnippingIcon />, mark: "bg-[#868686] w-4" },
];

function Taskbar() {
  return (
    <footer className="grid h-[51px] shrink-0 grid-cols-[1fr_auto_1fr] items-center border-t border-[#b9b9b0] bg-[linear-gradient(100deg,#d6eab8_0%,#d7ecb6_28%,#dfe9bb_36%,#d9eac0_42%,#dfecaf_47%,#f3e6bb_53%,#fae8d8_59%,#ebecef_67%,#caf4ec_73%,#c4efeb_80%,#cff6f4_85%,#bdefee_95%)]">
      <button className="flex items-center pl-3 pt-1 text-left">
        <svg viewBox="0 0 40 42" className="mb-1 h-[42px] w-10">
          <defs>
            <linearGradient id="haze" x1="0" y1="0" x2="0" y2="1">
              <stop offset="0" stopColor="#ffc81e" />
              <stop offset="1" stopColor="#ea6c12" />
            </linearGradient>
          </defs>
          <circle cx="14" cy="25" r="13" fill="url(#haze)" />
          <path d="M5 21h10M9 26h15M3 31h9M0 35h22" stroke="#f7dca0" strokeWidth="2.400" strokeLinecap="round" />
          <circle cx="22.500" cy="12.500" r="10" fill="#c42b1c" />
          <text x="22.500" y="17.500" textAnchor="middle" fontSize="15" fill="#fff">4</text>
        </svg>
        <span className="-ml-[2px] text-sm leading-5">
          <span className="block text-[#1b1b1b]">78°F</span>
          <span className="block text-[#5c6352]">Haze</span>
        </span>
      </button>

      <div className="ml-2 flex h-full items-center">
        <button aria-label="Start" className="mt-[6px]"><StartIcon /></button>
        <label className="ml-4 mr-1 mt-[5px] flex h-[38px] w-[273px] items-center rounded-full border border-[#c9cfb0] bg-[#f7f9ec] pl-[14px] pr-1">
          <Search className="size-[19px] shrink-0 text-[#222]" strokeWidth={2.2} />
          <input
            aria-label="Search web & PC"
            placeholder="Search web & PC"
            className="ml-3 min-w-0 flex-1 bg-transparent text-[17px] outline-none placeholder:text-[#555]"
          />
          <Bouquet />
        </label>
        {taskbarApps.map((a) => (
          <button
            key={a.name}
            aria-label={a.name}
            className="flex h-full w-[55px] items-center justify-center px-[3px] pt-[5px]"
          >
            <span
              className={
                "relative flex h-full w-full items-center justify-center pt-[2px] " +
                (a.active ? "rounded-t bg-[#fbf4e8] shadow-sm" : "")
              }
            >
              {a.icon}
              {a.mark && <span className={"absolute bottom-0 h-px " + a.mark} />}
            </span>
          </button>
        ))}
      </div>

      <div className="flex items-center justify-end pr-[15px] pt-[5px] text-[#1b1b1b]">
        <ChevronUp className="size-5" strokeWidth={1.8} />
        <svg viewBox="0 0 20 18" className="ml-5 h-[18px] w-5">
          <path d="M4 13A4 4 0 0 1 4 5q3-5 8-3 3 1 4 4 3 1 3 4 0 4-4 4H5Z" fill="#a8a8a8" stroke="#333" strokeWidth="1.200" />
          <circle cx="14.500" cy="12.500" r="5.500" fill="#0a6cc8" />
          <path d="M14.500 11.500v4M14.500 9v1.400" stroke="#fff" strokeWidth="1.300" />
        </svg>
        <svg viewBox="0 0 20 16" className="ml-5 h-4 w-5" fill="none" stroke="currentColor" strokeWidth="1.400" strokeLinecap="round">
          <path d="M1 6q9-9 18 0M3.800 8.800q6.200-6 12.400 0M6.500 11.500q3.500-3 7 0" />
          <circle cx="10" cy="14" r="1.400" fill="currentColor" stroke="none" />
        </svg>
        <svg viewBox="0 0 20 16" className="ml-[10px] h-4 w-5" fill="none" stroke="currentColor" strokeWidth="1.300" strokeLinecap="round" strokeLinejoin="round">
          <path d="M1 5.500h3l4-4v13l-4-4H1ZM11 5.500q1.500 2.500 0 5M13.800 3.500q3 4.500 0 9M16.500 1.500q4.500 6.500 0 13" />
        </svg>
        <svg viewBox="0 0 20 16" className="ml-[10px] h-4 w-5" fill="none" stroke="currentColor" strokeWidth="1.300">
          <path d="M8 3.500h8.500q1.500 0 1.500 1.500v6.500q0 1.500-1.500 1.500H3q-1.500 0-1.500-1.500V9" />
          <path d="M7 5.500h9v5.500H3.500V9.500Z" fill="currentColor" />
          <path d="M19.200 6.500v3.500" strokeWidth="1.600" />
          <path d="M3.500 0 .5 5h2.300L2 9l4-5H3.800L5 0Z" fill="currentColor" stroke="none" />
        </svg>
        <div className="ml-6 text-right text-sm leading-5">
          <div>6:53 PM</div>
          <div>9/7/2025</div>
        </div>
      </div>
    </footer>
  );
}

export default function App() {
  return (
    <div className={"flex h-screen flex-col overflow-hidden " + uiFont}>
      <div className="relative min-h-0 flex-1">
        <Editor />
        <BrowserWindow />
      </div>
      <Taskbar />
    </div>
  );
}
